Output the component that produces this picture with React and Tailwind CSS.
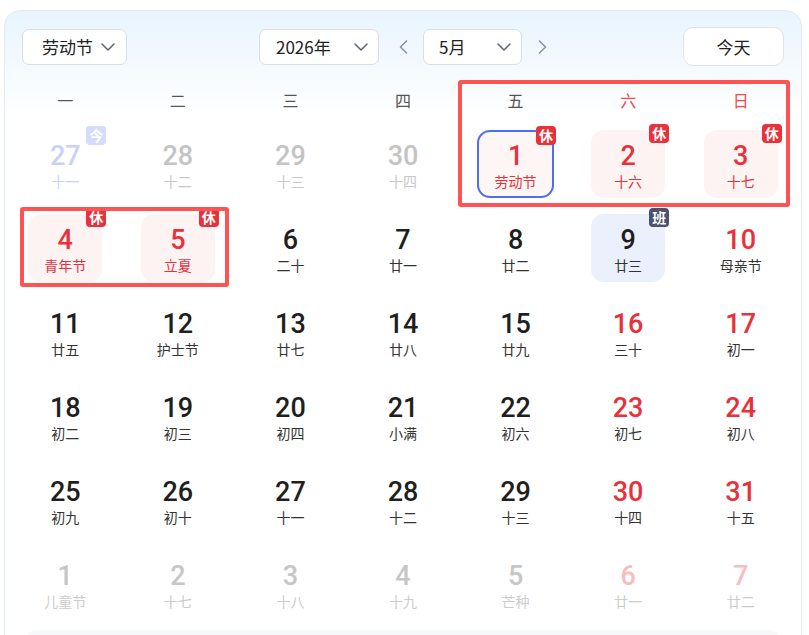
import React from "react";

const weekdays = [
  { t: "一", red: false },
  { t: "二", red: false },
  { t: "三", red: false },
  { t: "四", red: false },
  { t: "五", red: false },
  { t: "六", red: true },
  { t: "日", red: true },
];

const rows = [
  [
    { d: 27, l: "十一", k: "today" },
    { d: 28, l: "十二", k: "prev" },
    { d: 29, l: "十三", k: "prev" },
    { d: 30, l: "十四", k: "prev" },
    { d: 1, l: "劳动节", k: "sel" },
    { d: 2, l: "十六", k: "hol" },
    { d: 3, l: "十七", k: "hol" },
  ],
  [
    { d: 4, l: "青年节", k: "hol" },
    { d: 5, l: "立夏", k: "hol" },
    { d: 6, l: "二十", k: "norm" },
    { d: 7, l: "廿一", k: "norm" },
    { d: 8, l: "廿二", k: "norm" },
    { d: 9, l: "廿三", k: "work" },
    { d: 10, l: "母亲节", k: "wk" },
  ],
  [
    { d: 11, l: "廿五", k: "norm" },
    { d: 12, l: "护士节", k: "norm" },
    { d: 13, l: "廿七", k: "norm" },
    { d: 14, l: "廿八", k: "norm" },
    { d: 15, l: "廿九", k: "norm" },
    { d: 16, l: "三十", k: "wk" },
    { d: 17, l: "初一", k: "wk" },
  ],
  [
    { d: 18, l: "初二", k: "norm" },
    { d: 19, l: "初三", k: "norm" },
    { d: 20, l: "初四", k: "norm" },
    { d: 21, l: "小满", k: "norm" },
    { d: 22, l: "初六", k: "norm" },
    { d: 23, l: "初七", k: "wk" },
    { d: 24, l: "初八", k: "wk" },
  ],
  [
    { d: 25, l: "初九", k: "norm" },
    { d: 26, l: "初十", k: "norm" },
    { d: 27, l: "十一", k: "norm" },
    { d: 28, l: "十二", k: "norm" },
    { d: 29, l: "十三", k: "norm" },
    { d: 30, l: "十四", k: "wk" },
    { d: 31, l: "十五", k: "wk" },
  ],
  [
    { d: 1, l: "儿童节", k: "next" },
    { d: 2, l: "十七", k: "next" },
    { d: 3, l: "十八", k: "next" },
    { d: 4, l: "十九", k: "next" },
    { d: 5, l: "芒种", k: "next" },
    { d: 6, l: "廿一", k: "nextwk" },
    { d: 7, l: "廿二", k: "nextwk" },
  ],
];

const styles = {
  today: { box: "w-[74px] pt-[11px]", num: "text-[#c9d1f7]", lun: "text-[#c9d1f7]" },
  prev: { box: "w-[74px] pt-[11px]", num: "text-[#c4c4c4]", lun: "text-[#c8c8c8]" },
  sel: {
    box: "w-[77px] pt-[9px] bg-[#fef5f5] border-2 border-[#4c6ef0]",
    num: "text-[#e8313a]",
    lun: "text-[#e8313a]",
  },
  hol: { box: "w-[74px] pt-[11px] bg-[#fdf3f3]", num: "text-[#e8313a]", lun: "text-[#e8313a]" },
  work: { box: "w-[74px] pt-[11px] bg-[#ebf0fd]", num: "text-[#1f1f1f]", lun: "text-[#333333]" },
  norm: { box: "w-[74px] pt-[11px]", num: "text-[#1f1f1f]", lun: "text-[#333333]" },
  wk: { box: "w-[74px] pt-[11px]", num: "text-[#e8313a]", lun: "text-[#333333]" },
  next: { box: "w-[74px] pt-[11px]", num: "text-[#c6c6c6]", lun: "text-[#cccccc]" },
  nextwk: { box: "w-[74px] pt-[11px]", num: "text-[#f8bdbd]", lun: "text-[#cccccc]" },
};

function Chevron() {
  return (
    <svg width="14" height="8" viewBox="0 0 14 8" fill="none" className="shrink-0">
      <polyline
        points="1,1 7,7 13,1"
        stroke="#5b6579"
        strokeWidth="1.5"
        strokeLinecap="round"
        strokeLinejoin="round"
      />
    </svg>
  );
}

function Badge({ k }) {
  if (k === "hol" || k === "sel")
    return (
      <span className="absolute -top-[6px] -right-[4px] w-[20px] h-[19px] rounded-[4px] bg-[#e8313a] text-white text-[14px] leading-[19px] font-bold text-center">
        休
      </span>
    );
  if (k === "work")
    return (
      <span className="absolute -top-[6px] -right-[4px] w-[20px] h-[19px] rounded-[4px] bg-[#4a5270] text-white text-[14px] leading-[19px] font-bold text-center">
        班
      </span>
    );
  if (k === "today")
    return (
      <span className="absolute -top-[4px] -right-[4px] w-[20px] h-[19px] rounded-[4px] bg-[#d5dcfb] text-white text-[14px] leading-[19px] font-bold text-center">
        今
      </span>
    );
  return null;
}

function Cell({ c }) {
  const s = styles[c.k];
  return (
    <div className="flex justify-center">
      <div
        className={`relative h-[68px] rounded-[13px] flex flex-col items-center ${s.box}`}
      >
        <span
          className={`font-['Roboto',sans-serif] font-medium text-[27px] leading-[30px] ${s.num}`}
        >
          {c.d}
        </span>
        <span className={`mt-[1px] text-[14px] leading-[18px] whitespace-nowrap ${s.lun}`}>{c.l}</span>
        <Badge k={c.k} />
      </div>
    </div>
  );
}

export default function App() {
  return (
    <div className="h-[635px] overflow-hidden bg-white pl-[4px] pr-[7px] pt-[10px] font-['Noto_Sans_CJK_SC','Noto_Sans',sans-serif]">
      <div className="relative h-[700px] rounded-t-[16px] border border-[#e1ebf5] bg-[linear-gradient(180deg,#e8f4fd_0px,#ffffff_105px)]">
        {/* header */}
        <div className="grid grid-cols-[1fr_auto_1fr] items-center px-[17px] pt-[16px] h-[55px]">
          <div className="flex">
            <div className="flex items-center h-[36px] w-[105px] pl-[19px] pr-[10px] rounded-[7px] border border-[#d9dee7] bg-white whitespace-nowrap">
              <span className="text-[17px] leading-none text-[#222]">劳动节</span>
              <span className="ml-[8px] flex"><Chevron /></span>
            </div>
          </div>
          <div className="flex items-center">
            <div className="flex items-center justify-between h-[36px] w-[120px] pl-[16px] pr-[10px] rounded-[7px] border border-[#d9dee7] bg-white whitespace-nowrap">
              <span className="text-[17px] leading-none text-[#222]">2026年</span>
              <Chevron />
            </div>
            <div className="ml-[20px] mr-[15px] flex">
              <svg width="9" height="14" viewBox="0 0 9 14" fill="none">
                <polyline points="7.5,1 1.5,7 7.5,13" stroke="#8795aa" strokeWidth="1.6" strokeLinecap="round" strokeLinejoin="round" />
              </svg>
            </div>
            <div className="flex items-center justify-between h-[36px] w-[99px] pl-[15px] pr-[10px] rounded-[7px] border border-[#d9dee7] bg-white whitespace-nowrap">
              <span className="text-[17px] leading-none text-[#222]">5月</span>
              <Chevron />
            </div>
            <div className="ml-[16px] flex">
              <svg width="9" height="14" viewBox="0 0 9 14" fill="none">
                <polyline points="1.5,1 7.5,7 1.5,13" stroke="#8795aa" strokeWidth="1.6" strokeLinecap="round" strokeLinejoin="round" />
              </svg>
            </div>
          </div>
          <div className="flex justify-end">
            <div className="flex items-center justify-center h-[39px] w-[101px] rounded-[10px] border border-[#dfe2e8] bg-white">
              <span className="text-[17px] leading-none text-[#222]">今天</span>
            </div>
          </div>
        </div>

        {/* weekdays */}
        <div className="grid grid-cols-7 px-[4px] mt-[18px] h-[32px] items-center">
          {weekdays.map((w) => (
            <div
              key={w.t}
              className={`text-center text-[16px] leading-[32px] ${w.red ? "text-[#f04b4b]" : "text-[#555555]"}`}
            >
              {w.t}
            </div>
          ))}
        </div>

        {/* days */}
        <div className="grid grid-cols-7 gap-y-[16px] px-[4px] mt-[14px]">
          {rows.flat().map((c, i) => (
            <Cell key={i} c={c} />
          ))}
        </div>

        <div className="mx-[21px] mt-[12px] h-[40px] rounded-t-[10px] bg-[#f7f8fa]" />

        {/* annotation overlays */}
        <div className="absolute left-[453px] top-[69px] w-[332px] h-[127px] border-[4px] border-[#ff5252] rounded-[3px] pointer-events-none" />
        <div className="absolute left-[15px] top-[196px] w-[209px] h-[80px] border-[4px] border-[#ff5252] rounded-[3px] pointer-events-none" />
      </div>
    </div>
  );
}
